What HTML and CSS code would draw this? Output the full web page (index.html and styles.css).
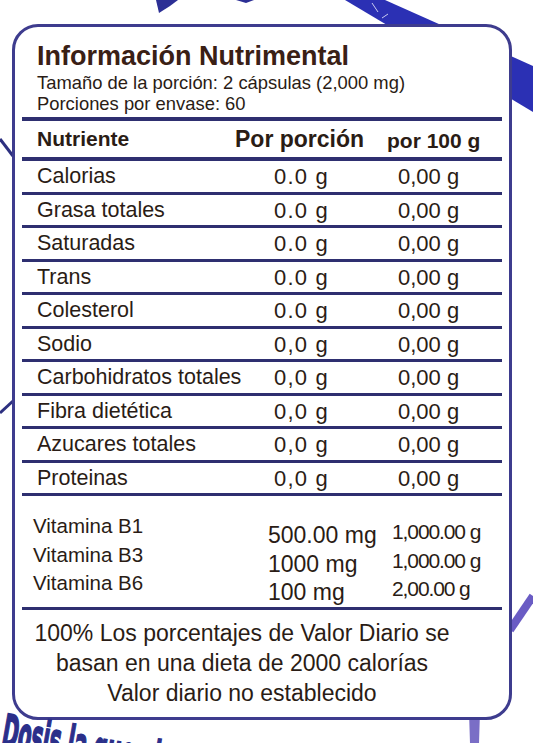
FILE: index.html
```html
<!DOCTYPE html>
<html lang="es">
<head>
  <meta charset="UTF-8">
  <meta name="viewport" content="width=device-width, initial-scale=1.0">
  <title>Información Nutrimental</title>
  <link rel="stylesheet" href="styles.css">
</head>
<body>

  <div class="page">
    <!-- Printed package behind the label -->
    <svg class="backdrop" width="533" height="743" viewBox="0 0 533 743">
      <path d="M156 0 L178 0 L170 6 L159 13 Z" fill="#2c2f95"/>
      <path d="M236 0 L254 0 L246 3 Z" fill="#2c2f95"/>
      <path d="M345 0 L385 0 L533 66 L533 112 Z" fill="#2b30b4"/>
      <path d="M372 3 L378 12 M382 18 L388 14" stroke="#c9ccf0" stroke-width="1" fill="none"/>
      <path d="M0 139 L13 156" stroke="#2d3080" stroke-width="3"/>
      <path d="M0 413 L13 401" stroke="#2d3080" stroke-width="3"/>
      <path d="M510 630 L533 596" stroke="#6a5cc4" stroke-width="8"/>
      <path d="M469 712 L480 712 L479 743 L470 743 Z" fill="#7a6ec6"/>
    </svg>

    <div class="label">
      <div class="label-head">
        <h1>Información Nutrimental</h1>
        <p>Tamaño de la porción: 2 cápsulas (2,000 mg)</p>
        <p>Porciones por envase: 60</p>
      </div>

      <div class="row row-head">
        <span class="name">Nutriente</span>
        <span class="per-portion">Por porción</span>
        <span class="per100">por 100 g</span>
      </div>

      <div class="row"><span class="name">Calorias</span><span class="val">0.0 g</span><span class="val val-b">0,00 g</span></div>
      <div class="row"><span class="name">Grasa totales</span><span class="val">0.0 g</span><span class="val val-b">0,00 g</span></div>
      <div class="row"><span class="name">Saturadas</span><span class="val">0.0 g</span><span class="val val-b">0,00 g</span></div>
      <div class="row"><span class="name">Trans</span><span class="val">0.0 g</span><span class="val val-b">0,00 g</span></div>
      <div class="row"><span class="name">Colesterol</span><span class="val">0.0 g</span><span class="val val-b">0,00 g</span></div>
      <div class="row"><span class="name">Sodio</span><span class="val">0,0 g</span><span class="val val-b">0,00 g</span></div>
      <div class="row"><span class="name">Carbohidratos totales</span><span class="val">0,0 g</span><span class="val val-b">0,00 g</span></div>
      <div class="row"><span class="name">Fibra dietética</span><span class="val">0,0 g</span><span class="val val-b">0,00 g</span></div>
      <div class="row"><span class="name">Azucares totales</span><span class="val">0,0 g</span><span class="val val-b">0,00 g</span></div>
      <div class="row"><span class="name">Proteinas</span><span class="val">0,0 g</span><span class="val val-b">0,00 g</span></div>

      <!-- Vitamins -->
      <div class="vitamins">
        <div class="vit-names">
          <div>Vitamina B1</div>
          <div>Vitamina B3</div>
          <div>Vitamina B6</div>
        </div>
        <div class="vit-dose">
          <div>500.00 mg</div>
          <div>1000 mg</div>
          <div>100 mg</div>
        </div>
        <div class="vit-100">
          <div>1,000.00 g</div>
          <div>1,000.00 g</div>
          <div>2,00.00 g</div>
        </div>
      </div>

      <div class="note">
        <p>100% Los porcentajes de Valor Diario se</p>
        <p>basan en una dieta de 2000 calorías</p>
        <p>Valor diario no establecido</p>
      </div>
    </div>

    <div class="dose">Dosis la que el médico indique</div>
  </div>

</body>
</html>
```

FILE: styles.css
```css
body {
  margin: 0;
  background: #fff;
  font-family: 'Liberation Sans', Arial, sans-serif;
  color: #2a1c15;
}

.page {
  position: relative;
  width: 533px;
  height: 743px;
  overflow: hidden;
  background: #fff;
}

.backdrop {
  position: absolute;
  top: 0;
  left: 0;
}

/* Label box */
.label {
  position: relative;
  margin: 24px 0 0 12px;
  width: 500px;
  box-sizing: border-box;
  border: 3px solid #3e3c8e;
  border-radius: 26px;
  background: #fff;
}

.label-head {
  margin: 0 7px;
  padding: 15px 0 3px 15px;
  border-bottom: 4px solid #2e2f70;
}

.label-head h1 {
  margin: 0 0 2px;
  font-size: 27px;
  line-height: 28px;
  font-weight: bold;
  color: #3a2015;
}

.label-head p {
  margin: 0;
  font-size: 18.4px;
  line-height: 21px;
}

/* Nutrient rows */
.row {
  display: grid;
  grid-template-columns: 213px 152px 1fr;
  margin: 0 7px;
  height: 30.5px;
  border-bottom: 3px solid #2e2f70;
}

.row .name {
  padding-left: 15px;
  font-size: 21.5px;
  line-height: 30.5px;
  white-space: nowrap;
}

.row .val {
  padding: 2px 0 0 39px;
  font-size: 22px;
  line-height: 28.5px;
  letter-spacing: 1.2px;
}

.row .val-b {
  padding-left: 11px;
  letter-spacing: 0;
}

.row-head {
  height: 36px;
  border-bottom-width: 4px;
  font-size: 21px;
  font-weight: bold;
  line-height: 36px;
}

.row-head .name {
  font-size: 21px;
  line-height: 36px;
}

.row-head .per-portion {
  font-size: 23px;
}

.row-head .per100 {
  padding-top: 3px;
  line-height: 33px;
}

/* Vitamins */
.vitamins {
  display: grid;
  grid-template-columns: 213px 152px 1fr;
  margin: 0 7px;
  padding-top: 16px;
  border-bottom: 3px solid #2e2f70;
}

.vit-names {
  padding-left: 11px;
  font-size: 20.5px;
  line-height: 28.5px;
}

.vit-dose {
  padding: 9px 0 0 33px;
  font-size: 23px;
  line-height: 28.5px;
  white-space: nowrap;
}

.vit-100 {
  padding: 6px 0 0 5px;
  font-size: 21px;
  line-height: 28.5px;
  letter-spacing: -1.1px;
  white-space: nowrap;
}

/* Footnote */
.note {
  padding: 8px 40px 9px 0;
  text-align: center;
}

.note p {
  margin: 0;
  font-size: 23px;
  line-height: 30px;
}

/* Text printed under the label */
.dose {
  margin: -12px 0 0 7px;
  font-family: 'DejaVu Sans', sans-serif;
  font-size: 46px;
  line-height: 46px;
  font-weight: bold;
  color: #2b2f8a;
  -webkit-text-stroke: 2px #2b2f8a;
  white-space: nowrap;
  transform: rotate(10deg) scaleX(0.42);
  transform-origin: left top;
}
```
